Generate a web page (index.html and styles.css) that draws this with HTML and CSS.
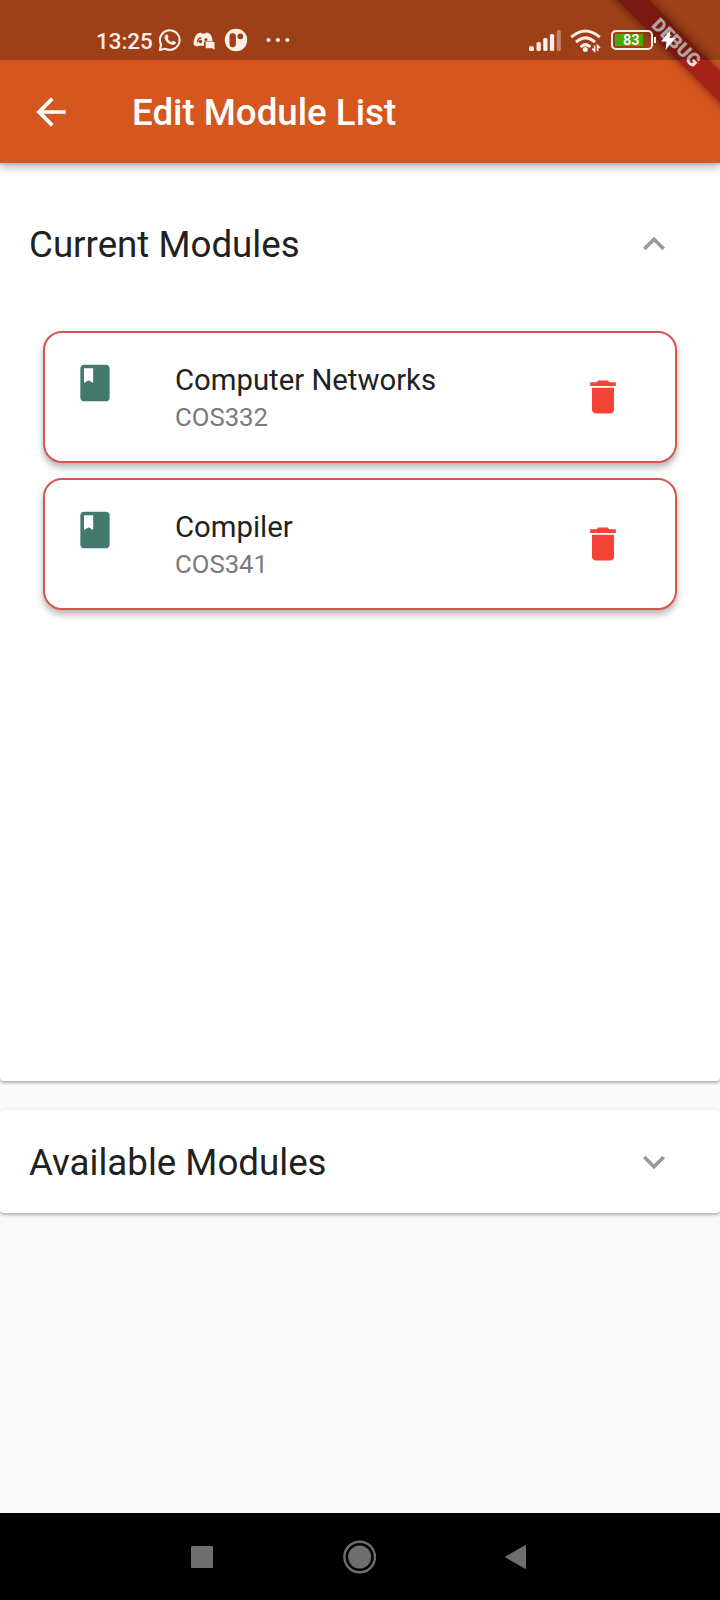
FILE: index.html
```html
<!DOCTYPE html>
<html lang="en">
<head>
<meta charset="utf-8">
<title>Edit Module List</title>
<link rel="stylesheet" href="styles.css">
</head>
<body>
<div class="screen">
  <header class="top">
    <div class="status">
      <span class="clock">13:25</span>
      <svg class="ico-chat" width="24" height="24" viewBox="0 0 24 24"><path d="M3.100 16.600A9.800 9.800 0 1 1 7.200 20.700L1.800 22.100Z" fill="none" stroke="#fdeee6" stroke-width="2.100" stroke-linejoin="round"/><path d="M8.100 6.500c.5-.4 1.200-.3 1.500.3l.9 1.900c.2.5-.1.9-.8 1.700.8 1.700 2.100 2.900 4 3.700.8-1 1.200-1.500 1.700-1.200l2.100 1c.6.3.5 1-.1 1.900-.7.9-2.300 1.400-3.600 1C10 15.700 7.400 13 6.600 10.200c-.3-1.600.5-3 1.500-3.700Z" fill="#fdeee6"/></svg>
      <svg class="ico-discord" width="22" height="18" viewBox="0 0 22 18"><path d="M4 2C5.500 1 7 .5 8 .4l.6 1.200h3.800L13 .4c1.500.2 3 .8 4.200 1.600 1.500 2.300 2.300 4.800 2.500 7.500h-8.700v4.200H6L4.500 14.500C3 14.200 1.500 13.600.5 12.700.4 8.600 1.500 5 4 2Z" fill="#fdeee6"/><path d="M4.600 10.600C4.600 7.800 6 6 8.300 6" fill="none" stroke="#9d3f19" stroke-width="1.500"/><circle cx="7.500" cy="9.500" r="1.700" fill="#9d3f19"/><circle cx="13" cy="7.600" r="1.500" fill="#9d3f19"/><path d="M12.700 10h8.800v8l-2-1.800h-6.800Z" fill="#fdeee6"/></svg>
      <svg class="ico-round" width="24" height="24" viewBox="0 0 24 24"><circle cx="12" cy="12" r="11.200" fill="#fdeee6"/><rect x="5.500" y="5.200" width="6.400" height="14" rx="3" fill="#9d3f19"/><circle cx="16.300" cy="8.300" r="2.900" fill="#9d3f19"/></svg>
      <svg class="ico-dots" width="24" height="6" viewBox="0 0 24 6" fill="#fdeee6"><circle cx="2.500" cy="3" r="2.100"/><circle cx="11.900" cy="3" r="2.100"/><circle cx="21.300" cy="3" r="2.100"/></svg>
      <span class="spacer"></span>
      <svg class="ico-signal" width="33" height="22" viewBox="0 0 33 22" fill="#fdeee6"><rect x="0" y="16.300" width="5" height="4.700" rx="1.500"/><rect x="7.500" y="12" width="4.300" height="9" rx="1.500"/><rect x="14.200" y="8" width="4.300" height="13" rx="1.500"/><rect x="20.900" y="4" width="4.300" height="17" rx="1.500"/><rect x="27.800" y="0" width="4" height="21" rx="1.500" opacity=".4"/></svg>
      <svg class="ico-wifi" width="32" height="24" viewBox="0 0 32 24"><g fill="none" stroke="#fdeee6" stroke-width="3"><path d="M1.200 8.200Q15.500-4.200 29.800 8.200"/><path d="M6 13.200Q15.500 4.600 25 13.200"/><path d="M10.600 18Q15.500 13.400 20.400 18"/></g><circle cx="15.300" cy="20.600" r="2.500" fill="#fdeee6"/><path d="M24.600 16.500V22L22.200 19.600M27.600 22V16.500L30 19" fill="none" stroke="#fdeee6" stroke-width="1.600"/></svg>
      <div class="battery"><span>83</span></div>
      <svg class="ico-bolt" width="14" height="20" viewBox="0 0 14 20"><path d="M9.500 0 0 11.500h5.500L4.600 20 14 8H8.500Z" fill="#fff"/></svg>
    </div>
    <div class="appbar">
      <svg width="44" height="44" viewBox="0 0 24 24"><path d="M20 11H7.830l5.590-5.590L12 4l-8 8 8 8 1.410-1.410L7.830 13H20v-2z" fill="#fff"/></svg>
      <h1>Edit Module List</h1>
    </div>
    <div class="debug"><span>DEBUG</span></div>
  </header>

  <main>
    <section class="panel panel-open">
      <div class="panel-head">
        <h2>Current Modules</h2>
        <svg width="44" height="44" viewBox="0 0 24 24"><path d="M12 8l-6 6 1.410 1.410L12 10.830l4.590 4.580L18 14z" fill="#999"/></svg>
      </div>
      <div class="cards">
        <article class="card">
          <svg class="book" width="44" height="44" viewBox="0 0 24 24"><path d="M18 2H6c-1.100 0-2 .9-2 2v16c0 1.100.9 2 2 2h12c1.100 0 2-.9 2-2V4c0-1.100-.9-2-2-2zM6 4h5v8l-2.500-1.500L6 12V4z" fill="#427b6e"/></svg>
          <div class="info"><h3>Computer Networks</h3><p>COS332</p></div>
          <svg class="bin" width="44" height="44" viewBox="0 0 24 24"><path d="M6 19c0 1.100.9 2 2 2h8c1.100 0 2-.9 2-2V7H6v12zM19 4h-3.500l-1-1h-5l-1 1H5v2h14V4z" fill="#f44336"/></svg>
        </article>
        <article class="card">
          <svg class="book" width="44" height="44" viewBox="0 0 24 24"><path d="M18 2H6c-1.100 0-2 .9-2 2v16c0 1.100.9 2 2 2h12c1.100 0 2-.9 2-2V4c0-1.100-.9-2-2-2zM6 4h5v8l-2.500-1.500L6 12V4z" fill="#427b6e"/></svg>
          <div class="info"><h3>Compiler</h3><p>COS341</p></div>
          <svg class="bin" width="44" height="44" viewBox="0 0 24 24"><path d="M6 19c0 1.100.9 2 2 2h8c1.100 0 2-.9 2-2V7H6v12zM19 4h-3.500l-1-1h-5l-1 1H5v2h14V4z" fill="#f44336"/></svg>
        </article>
      </div>
    </section>
    <section class="panel">
      <div class="panel-head">
        <h2>Available Modules</h2>
        <svg width="44" height="44" viewBox="0 0 24 24"><path d="M16.590 8.590L12 13.170 7.410 8.590 6 10l6 6 6-6z" fill="#999"/></svg>
      </div>
    </section>
  </main>

  <nav class="sysnav">
    <svg width="22" height="22" viewBox="0 0 22 22"><rect width="22" height="22" rx="1" fill="#6e6e6e"/></svg>
    <svg width="34" height="34" viewBox="0 0 34 34"><circle cx="17.700" cy="17" r="15.300" fill="none" stroke="#6e6e6e" stroke-width="2.400"/><circle cx="17.700" cy="17" r="11.500" fill="#6e6e6e"/></svg>
    <svg width="22" height="26" viewBox="0 0 22 26"><path d="M.5 13 20.500 1.500v23Z" fill="#6e6e6e" stroke="#6e6e6e" stroke-width="1" stroke-linejoin="round"/></svg>
  </nav>
</div>
</body>
</html>
```

FILE: styles.css
```css
* { box-sizing: border-box; }
body { margin: 0; font-family: Roboto, "Liberation Sans", sans-serif; }
h1, h2, h3, p { margin: 0; font-weight: 400; white-space: nowrap; }
svg { display: block; flex: none; }

.screen {
  width: 720px;
  height: 1600px;
  display: flex;
  flex-direction: column;
  background: #fafafa;
  overflow: hidden;
}

.top {
  position: relative;
  z-index: 2;
  background: #d65620;
  box-shadow: 0 5px 9px rgba(0, 0, 0, .24), 0 2px 3px rgba(0, 0, 0, .1);
  clip-path: inset(0 0 -20px 0);
}
/* Translucent bar that also tints the debug ribbon beneath it */
.status {
  position: relative;
  z-index: 2;
  height: 60px;
  padding: 20px 45px 0 96px;
  display: flex;
  align-items: center;
  background: rgba(0, 0, 0, .262);
}
.clock { font-size: 22.4px; font-weight: 500; line-height: 38px; padding-top: 2px; color: #fdeee6; width: 62px; }
.ico-discord { margin-left: 11px; margin-top: 2px; }
.ico-round { margin-left: 9px; }
.ico-dots { margin-left: 18px; }
.spacer { flex: 1; }
.ico-signal { margin-right: 8px; margin-top: 2px; }
.ico-wifi { margin-right: 9px; margin-top: 2px; }
.battery {
  position: relative;
  flex: none;
  width: 42px;
  height: 20px;
  padding: 2px;
  border: 2px solid #fdeee6;
  border-radius: 5px;
}
.battery span {
  display: block;
  height: 12px;
  width: 28px;
  background: #46aa08;
  color: #fff;
  font-size: 14.5px;
  font-weight: 500;
  line-height: 13px;
  text-indent: 8px;
}
.battery::after {
  content: "";
  position: absolute;
  left: 41px;
  top: 5px;
  width: 2px;
  height: 6px;
  background: #fdeee6;
}
.ico-bolt { margin-left: 8px; }

.appbar {
  height: 103px;
  padding-left: 29px;
  display: flex;
  align-items: center;
  gap: 59px;
}
.appbar h1 { font-size: 36.7px; font-weight: 500; line-height: 44px; color: #fff; padding-top: 2px; }

.debug {
  position: absolute;
  z-index: 1;
  left: 576px;
  top: 32px;
  width: 200px;
  height: 22px;
  transform: rotate(45deg);
  background: #a62219;
  box-shadow: 0 0 10px rgba(0, 0, 0, .5);
  display: flex;
  align-items: center;
  justify-content: center;
}
.debug span { color: #f1dfdd; font-size: 18.7px; font-weight: 900; line-height: 22px; }

main { flex: 1; }
.panel {
  background: #fff;
  border-radius: 4px;
  box-shadow: 0 2px 3px rgba(0, 0, 0, .24), 0 1px 5px rgba(0, 0, 0, .1);
}
.panel-open { height: 918px; margin-bottom: 29px; }
.panel-head {
  height: 103px;
  padding: 0 44px 0 29px;
  display: flex;
  align-items: center;
  justify-content: space-between;
}
.panel-open .panel-head { height: 161px; }
.panel-head h2 { font-size: 36.7px; line-height: 44px; color: #212121; padding-top: 2px; }

.cards { padding: 7px 43px 0; display: flex; flex-direction: column; gap: 15px; }
.card {
  height: 132px;
  padding: 0 50px 0 28px;
  display: flex;
  align-items: center;
  border: 2px solid #d65551;
  border-radius: 19px;
  background: #fff;
  box-shadow: 0 5px 7px rgba(0, 0, 0, .24), 0 2px 6px rgba(0, 0, 0, .08);
}
.book { align-self: flex-start; margin-top: 27.5px; }
.info { flex: 1; margin-left: 58px; padding-top: 3px; }
.info h3 { font-size: 29.3px; line-height: 38px; color: #212121; }
.info p { font-size: 25.7px; line-height: 37px; color: #7b7b7b; }

.sysnav {
  height: 87px;
  background: #000;
  display: flex;
  align-items: center;
  justify-content: space-between;
  padding: 0 193px 0 191px;
}
```
